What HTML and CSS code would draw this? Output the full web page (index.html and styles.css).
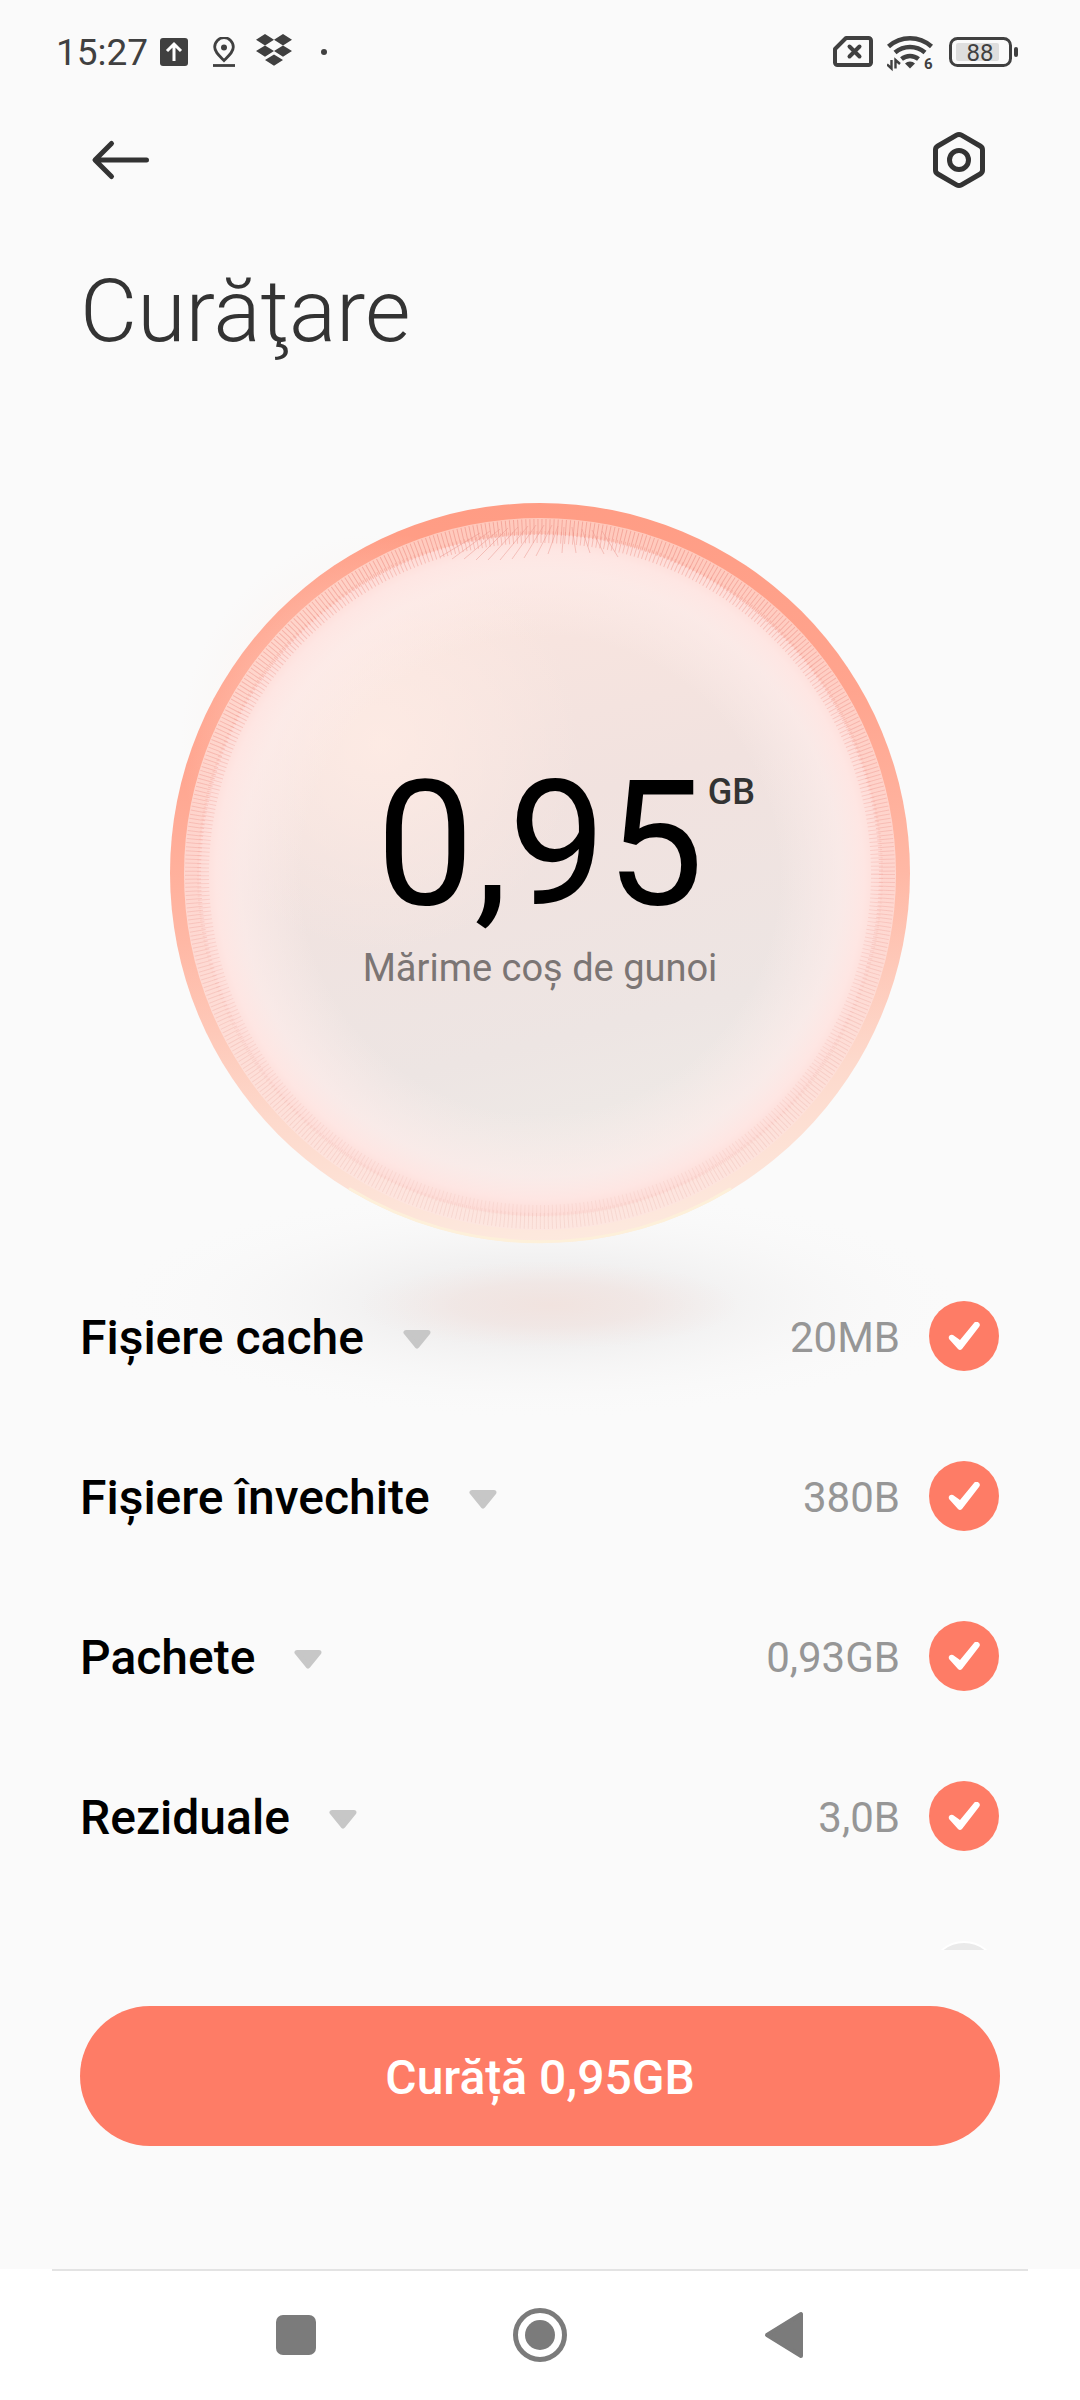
FILE: index.html
```html
<!DOCTYPE html>
<html lang="ro">
<head>
<meta charset="utf-8">
<meta name="viewport" content="width=device-width, initial-scale=1">
<title>Curăţare</title>
<link rel="stylesheet" href="styles.css">
</head>
<body>
<div class="app">
  <header class="status">
    <div class="status-left">
      <time class="clock">15:27</time>
      <svg width="28" height="28" viewBox="0 0 28 28" aria-hidden="true">
        <rect width="28" height="28" rx="3" fill="#404040"/>
        <path d="M14 23V7M7 13l7-7 7 7" fill="none" stroke="#fff" stroke-width="3"/>
      </svg>
      <svg class="pin" width="22" height="30" viewBox="0 0 22 30" aria-hidden="true">
        <path d="M11 23.500C6 18.500 1.700 15 1.700 10a9.300 9.300 0 0 1 18.600 0c0 5-4.300 8.500-9.300 13.500z" fill="none" stroke="#404040" stroke-width="2.800"/>
        <circle cx="11" cy="10.500" r="3" fill="#404040"/>
        <path d="M0 28.500h22" stroke="#404040" stroke-width="2.800"/>
      </svg>
      <svg class="box" width="36" height="32" viewBox="0 0 36 32" aria-hidden="true">
        <path d="M9 0l9 5.700-9 5.700-9-5.700zM27 0l9 5.700-9 5.700-9-5.700zM9 11.400l9 5.700-9 5.600-9-5.600zM27 11.400l9 5.700-9 5.600-9-5.600zM18 20.400l9 5.600-9 5.700-9-5.700z" fill="#404040"/>
      </svg>
      <svg class="dot" width="6" height="6" viewBox="0 0 6 6" aria-hidden="true"><circle cx="3" cy="3" r="3" fill="#404040"/></svg>
    </div>
    <div class="status-right">
      <svg width="40" height="32" viewBox="0 0 40 32" aria-hidden="true">
        <path d="M13 2h22.500A2.500 2.500 0 0 1 38 4.500v22a2.500 2.500 0 0 1-2.500 2.500h-31A2.500 2.500 0 0 1 2 26.500V13z" fill="none" stroke="#404040" stroke-width="4" stroke-linejoin="round"/>
        <path d="M16.500 10.500l10 10M26.500 10.500l-10 10" stroke="#404040" stroke-width="4" stroke-linecap="round"/>
      </svg>
      <svg class="wifi" width="48" height="40" viewBox="0 0 48 40" aria-hidden="true">
        <g fill="none" stroke="#404040" stroke-width="4.500">
          <path d="M1.500 12.500a32 32 0 0 1 43 0"/>
          <path d="M8 18.500a23 23 0 0 1 30 0"/>
          <path d="M14.500 25a13.500 13.500 0 0 1 17 0"/>
        </g>
        <path d="M23 34.500l-5-5a7 7 0 0 1 10 0z" fill="#404040"/>
        <path d="M4.500 26v8.500L0 30.500M8.500 34.500V26l4.500 4" fill="none" stroke="#404040" stroke-width="2.400"/>
        <text class="wifi-gen" x="37" y="35">6</text>
      </svg>
      <svg width="70" height="30" viewBox="0 0 70 30" aria-hidden="true">
        <rect x="1.500" y="1.500" width="60" height="27" rx="7" fill="none" stroke="#404040" stroke-width="3"/>
        <rect x="7" y="6" width="43" height="18" rx="2" fill="#dedede"/>
        <rect x="65" y="10" width="4" height="10" rx="2" fill="#404040"/>
        <text class="charge" x="31" y="24" text-anchor="middle">88</text>
      </svg>
    </div>
  </header>

  <div class="toolbar">
    <button class="icon-button" type="button" aria-label="Înapoi">
      <svg width="60" height="60" viewBox="0 0 60 60" aria-hidden="true">
        <path d="M56.500 30H5.500M21.500 13.500L5 30l16.500 16.500" fill="none" stroke="#333" stroke-width="5" stroke-linecap="round" stroke-linejoin="round"/>
      </svg>
    </button>
    <button class="icon-button" type="button" aria-label="Setări">
      <svg width="60" height="60" viewBox="0 0 60 60" aria-hidden="true">
        <path d="M27.500 5.200a5 5 0 0 1 5 0L51.200 16a4.500 4.500 0 0 1 2.300 4v20a4.500 4.500 0 0 1-2.300 4L32.500 54.800a5 5 0 0 1-5 0L8.800 44a4.500 4.500 0 0 1-2.300-4V20a4.500 4.500 0 0 1 2.300-4z" fill="none" stroke="#333" stroke-width="5"/>
        <circle cx="30" cy="30" r="9.500" fill="none" stroke="#333" stroke-width="5"/>
      </svg>
    </button>
  </div>

  <h1 class="title">Curăţare</h1>

  <section class="hero">
    <svg class="orb" viewBox="0 0 740 740" aria-hidden="true">
      <defs>
        <linearGradient id="rim" x1="0.400" y1="0" x2="0.500" y2="1">
          <stop offset="0" stop-color="#ff9c84"/>
          <stop offset="0.300" stop-color="#ffa48e"/>
          <stop offset="0.550" stop-color="#ffb8a5"/>
          <stop offset="0.800" stop-color="#fdd9cc"/>
          <stop offset="1" stop-color="#fde9de"/>
        </linearGradient>
        <linearGradient id="band" x1="0" y1="0" x2="0" y2="1">
          <stop offset="0" stop-color="#ffc9bc"/>
          <stop offset="0.500" stop-color="#fed6cf"/>
          <stop offset="1" stop-color="#fde6e0"/>
        </linearGradient>
        <linearGradient id="hatch" x1="0" y1="0" x2="0" y2="1">
          <stop offset="0" stop-color="#ee8f84"/>
          <stop offset="0.500" stop-color="#f2a8a0" stop-opacity="0.800"/>
          <stop offset="1" stop-color="#e9b8ae" stop-opacity="0.500"/>
        </linearGradient>
        <linearGradient id="glass" x1="0.300" y1="0" x2="0.550" y2="1">
          <stop offset="0" stop-color="#fee5dd"/>
          <stop offset="0.200" stop-color="#f7e4df"/>
          <stop offset="0.420" stop-color="#f1e2df"/>
          <stop offset="0.750" stop-color="#ede5e3"/>
          <stop offset="1" stop-color="#efece8"/>
        </linearGradient>
        <radialGradient id="glow">
          <stop offset="0.700" stop-color="#fdeeec" stop-opacity="0"/>
          <stop offset="0.880" stop-color="#fdecea" stop-opacity="0.700"/>
          <stop offset="0.950" stop-color="#fee6e3"/>
          <stop offset="1" stop-color="#fedcd7"/>
        </radialGradient>
        <radialGradient id="warm">
          <stop offset="0" stop-color="#ffece5" stop-opacity="0.800"/>
          <stop offset="1" stop-color="#ffece5" stop-opacity="0"/>
        </radialGradient>
        <radialGradient id="shade">
          <stop offset="0" stop-color="#ecebeb"/>
          <stop offset="0.400" stop-color="#f1f0f0" stop-opacity="0.850"/>
          <stop offset="1" stop-color="#fafafa" stop-opacity="0"/>
        </radialGradient>
        <radialGradient id="blush">
          <stop offset="0" stop-color="#f1e3df"/>
          <stop offset="0.500" stop-color="#f1e4e1" stop-opacity="0.700"/>
          <stop offset="1" stop-color="#f3e8e6" stop-opacity="0"/>
        </radialGradient>
      </defs>
      <ellipse cx="370" cy="800" rx="430" ry="116" fill="url(#shade)"/>
      <ellipse cx="380" cy="802" rx="190" ry="44" fill="url(#blush)"/>
      <circle cx="370" cy="370" r="370" fill="url(#rim)"/>
      <circle cx="370" cy="371" r="356" fill="url(#band)"/>
      <circle cx="370" cy="372" r="340" fill="url(#glass)"/>
      <ellipse cx="210" cy="240" rx="200" ry="210" fill="url(#warm)"/>
      <circle cx="370" cy="372" r="341" fill="url(#glow)"/>
      <g fill="none" stroke="url(#hatch)">
        <circle cx="370" cy="371" r="347" stroke-width="16" stroke-dasharray="1 3" opacity="0.600"/>
        <circle cx="370" cy="371" r="337" stroke-width="12" stroke-dasharray="1 3" opacity="0.450"/>
      </g>
      <path d="M270 54l40-24M282 56l38-28M294 56l36-30M306 57l32-32M318 57l30-33M330 57l28-34M342 56l24-34M354 55l20-33M366 53l16-31M378 51l10-28M392 50l2-26M406 50l-4-26M420 50l-8-24M434 51l-12-24M448 54l-16-26" fill="none" stroke="#e99187" stroke-width="1" opacity="0.450"/>
      <path d="M180 686a368 368 0 0 0 380 0" fill="none" stroke="#fdf0da" stroke-width="3" stroke-linecap="round"/>
    </svg>
    <div class="reading">
      <p class="amount">0,95<span class="unit">GB</span></p>
      <p class="caption">Mărime coș de gunoi</p>
    </div>
  </section>

  <ul class="list">
    <li class="row">
      <button class="expand" type="button"><span class="label" id="l1">Fișiere cache</span><svg class="caret" width="28" height="19" viewBox="0 0 28 19" aria-hidden="true"><path d="M3 2.500h22L14 16z"/></svg></button>
      <span class="size">20MB</span>
      <input class="check" type="checkbox" checked aria-labelledby="l1">
    </li>
    <li class="row">
      <button class="expand" type="button"><span class="label" id="l2">Fișiere învechite</span><svg class="caret" width="28" height="19" viewBox="0 0 28 19" aria-hidden="true"><path d="M3 2.500h22L14 16z"/></svg></button>
      <span class="size">380B</span>
      <input class="check" type="checkbox" checked aria-labelledby="l2">
    </li>
    <li class="row">
      <button class="expand" type="button"><span class="label" id="l3">Pachete</span><svg class="caret" width="28" height="19" viewBox="0 0 28 19" aria-hidden="true"><path d="M3 2.500h22L14 16z"/></svg></button>
      <span class="size">0,93GB</span>
      <input class="check" type="checkbox" checked aria-labelledby="l3">
    </li>
    <li class="row">
      <button class="expand" type="button"><span class="label" id="l4">Reziduale</span><svg class="caret" width="28" height="19" viewBox="0 0 28 19" aria-hidden="true"><path d="M3 2.500h22L14 16z"/></svg></button>
      <span class="size">3,0B</span>
      <input class="check" type="checkbox" checked aria-labelledby="l4">
    </li>
    <li class="row">
      <input class="check" type="checkbox" aria-label="Selectează">
    </li>
  </ul>

  <div class="action">
    <button class="clean" type="button">Curăță 0,95GB</button>
  </div>

  <nav class="nav">
    <button class="nav-button" type="button" aria-label="Recente">
      <svg width="40" height="40" viewBox="0 0 40 40" aria-hidden="true"><rect width="40" height="40" rx="7" fill="#7b7b7b"/></svg>
    </button>
    <button class="nav-button" type="button" aria-label="Acasă">
      <svg width="54" height="54" viewBox="0 0 54 54" aria-hidden="true"><circle cx="27" cy="27" r="24.500" fill="none" stroke="#7b7b7b" stroke-width="5"/><circle cx="27" cy="27" r="15" fill="#7b7b7b"/></svg>
    </button>
    <button class="nav-button" type="button" aria-label="Înapoi">
      <svg width="40" height="48" viewBox="0 0 40 48" aria-hidden="true"><path d="M37 3v42L3 24z" fill="#7b7b7b" stroke="#7b7b7b" stroke-width="4" stroke-linejoin="round"/></svg>
    </button>
  </nav>
</div>
</body>
</html>
```

FILE: styles.css
```css
* {
  box-sizing: border-box;
}

body {
  margin: 0;
  background: #fafafa;
  color: #000;
  font-family: Roboto, "Noto Sans", sans-serif;
}

button {
  padding: 0;
  border: 0;
  background: none;
  color: inherit;
  font: inherit;
  cursor: pointer;
}

svg {
  display: block;
  flex: none;
}

.app {
  display: flex;
  flex-direction: column;
  height: 100vh;
  overflow: hidden;
}

.status {
  display: flex;
  justify-content: space-between;
  align-items: center;
  height: 104px;
  padding: 0 61px 0 56px;
  color: #404040;
}

.status-left,
.status-right {
  display: flex;
  align-items: center;
}

.status-right {
  gap: 14px;
}

.clock {
  margin-right: 12px;
  padding-top: 2px;
  font-size: 37px;
  line-height: 48px;
}

.pin {
  margin-left: 25px;
}

.box {
  margin: 0 29px 4px 21px;
}

.wifi {
  margin-top: 4px;
}

.wifi-gen {
  fill: #404040;
  font-size: 15px;
  font-weight: 700;
}

.charge {
  fill: #404040;
  font-size: 24px;
}

.toolbar {
  display: flex;
  justify-content: space-between;
  align-items: center;
  height: 112px;
  padding: 0 91px 0 90px;
}

.title {
  margin: 43px 80px 0;
  color: #333;
  font-size: 88px;
  font-weight: 300;
  line-height: 104px;
}

.hero {
  display: grid;
  justify-items: center;
  margin-top: 140px;
}

.orb {
  grid-area: 1 / 1;
  width: 740px;
  max-width: 100%;
  overflow: visible;
}

.reading {
  grid-area: 1 / 1;
  align-self: center;
  display: flex;
  flex-direction: column;
  align-items: center;
  gap: 24px;
  padding-top: 16px;
}

.amount {
  position: relative;
  margin: 0;
  font-size: 174px;
  font-weight: 450;
  line-height: 150px;
}

.unit {
  position: absolute;
  top: 2px;
  left: 100%;
  margin-left: 4px;
  color: #333;
  font-size: 36px;
  font-weight: 500;
  line-height: 40px;
}

.caption {
  margin: 0;
  color: #7b7574;
  font-size: 38px;
  line-height: 48px;
}

.list {
  position: relative;
  flex: 1;
  min-height: 0;
  margin: 13px 0 0;
  padding: 0 81px 0 80px;
  overflow: hidden;
  list-style: none;
}

.row {
  display: flex;
  align-items: center;
  justify-content: flex-end;
  height: 160px;
}

.expand {
  display: flex;
  align-items: center;
  gap: 39px;
  margin-right: auto;
}

.label {
  padding-top: 4px;
  font-size: 48px;
  font-weight: 500;
  line-height: 56px;
}

.caret {
  margin-top: 6px;
  fill: #c7c7c7;
  stroke: #c7c7c7;
  stroke-width: 5px;
  stroke-linejoin: round;
}

.size {
  padding-top: 4px;
  color: #969696;
  font-size: 42px;
  line-height: 56px;
}

.check {
  appearance: none;
  display: grid;
  place-items: center;
  width: 70px;
  height: 70px;
  margin: 0 0 0 29px;
  border: 2px solid #fff;
  border-radius: 50%;
  background: #eaeaea;
}

.check:checked {
  border: 0;
  background: #fe7c66;
}

.check:checked::before {
  content: "";
  width: 32px;
  height: 28px;
  background: #fff;
  clip-path: path("M1 17a3 3 0 0 1 4-4l7 5L26 1a3 3 0 0 1 5 4L14 27a3 3 0 0 1-4 0z");
}

.action {
  padding: 56px 80px 123px;
}

.clean {
  width: 100%;
  height: 140px;
  padding-top: 2px;
  border-radius: 70px;
  background: #fe7c66;
  color: #fff;
  font-size: 48px;
  font-weight: 500;
}

.nav {
  display: flex;
  justify-content: center;
  height: 131px;
  background: linear-gradient(#e3e3e3, #e3e3e3) center top / calc(100% - 104px) 2px no-repeat #fff;
}

.nav-button {
  display: grid;
  place-items: center;
  width: 244px;
}
```
